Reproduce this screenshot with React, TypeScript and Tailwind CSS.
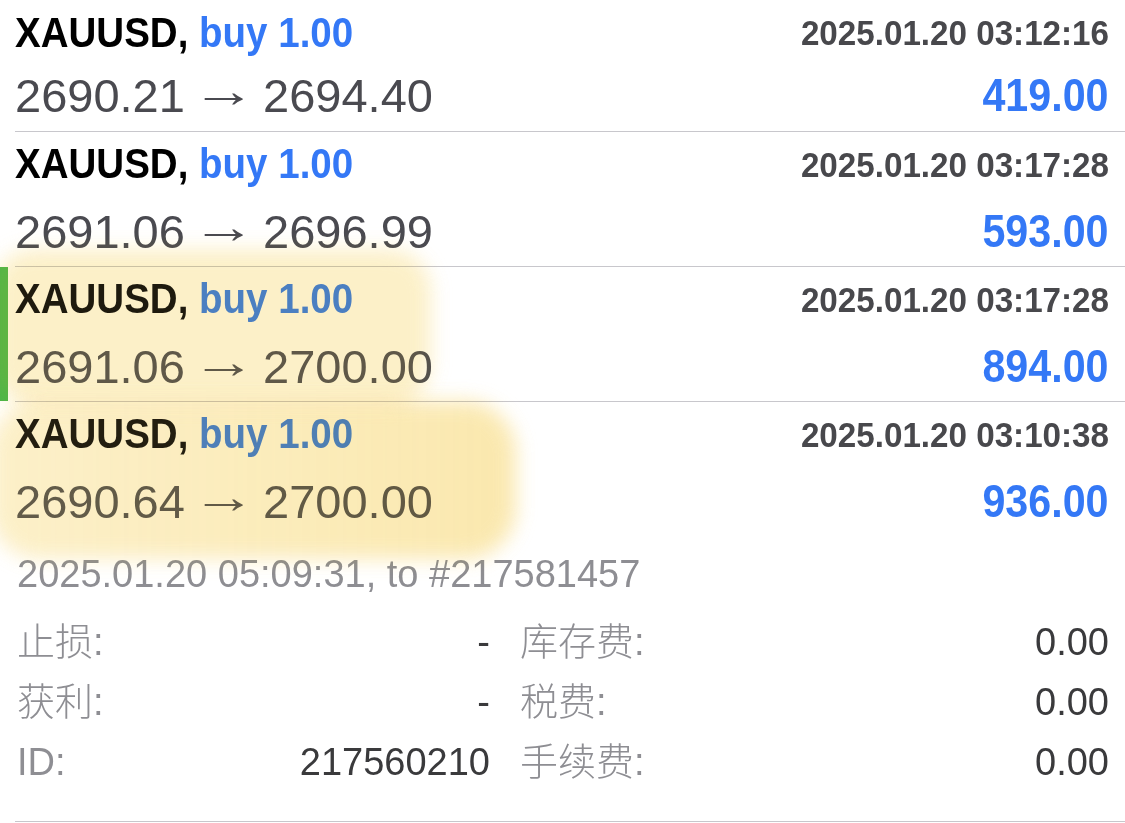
import React from 'react';

type Trade = {
  open: string;
  close: string;
  time: string;
  profit: string;
  active?: boolean;
};

const trades: Trade[] = [
  { open: '2690.21', close: '2694.40', time: '2025.01.20 03:12:16', profit: '419.00' },
  { open: '2691.06', close: '2696.99', time: '2025.01.20 03:17:28', profit: '593.00' },
  { open: '2691.06', close: '2700.00', time: '2025.01.20 03:17:28', profit: '894.00', active: true },
  { open: '2690.64', close: '2700.00', time: '2025.01.20 03:10:38', profit: '936.00' },
];

const details = [
  { label: '止损:', value: '-', label2: '库存费:', value2: '0.00' },
  { label: '获利:', value: '-', label2: '税费:', value2: '0.00' },
  { label: 'ID:', value: '217560210', label2: '手续费:', value2: '0.00' },
];

const bold = "font-['Liberation_Sans',sans-serif] font-bold";

function TradeRow({ trade, first }: { trade: Trade; first: boolean }) {
  return (
    <div className="flex">
      {/* 左侧标记 */}
      <div className={`w-[15px] flex flex-col ${first ? '' : 'pt-px'}`}>
        {trade.active && <div className="w-2 flex-1 bg-[#4cb848]" />}
      </div>
      <div className={`flex-1 pr-[16px] ${first ? 'pb-[6px]' : 'border-t border-[#c8c7cc]'}`}>
        <div className={`flex items-center justify-between ${first ? 'h-[65px]' : 'h-[64px]'}`}>
          <span className={`${bold} inline-block origin-left scale-x-[0.917] whitespace-nowrap text-[42px] leading-none text-black`}>
            XAUUSD, <span className="text-[#3478f6]">buy 1.00</span>
          </span>
          <span className={`${bold} inline-block origin-right scale-x-[0.948] whitespace-nowrap text-[35px] leading-none text-[#48484c]`}>
            {trade.time}
          </span>
        </div>
        <div className={`flex items-center justify-between ${first ? 'h-[60px]' : 'h-[70px]'}`}>
          <span className="font-['Liberation_Sans',sans-serif] whitespace-nowrap text-[47px] leading-none text-[#4a4a50]">
            {trade.open}{' '}
            <span className="inline-block ml-[2px] mr-[3px] -translate-y-[5px] scale-x-[1.37]">→</span>{' '}
            {trade.close}
          </span>
          <span className={`${bold} inline-block origin-right scale-x-[0.885] text-[46.6px] leading-none text-[#3478f6]`}>
            {trade.profit}
          </span>
        </div>
      </div>
    </div>
  );
}

export default function App() {
  return (
    <div className="relative w-[1125px] h-[823px] overflow-hidden bg-white">
      {trades.map((t, i) => (
        <TradeRow key={i} trade={t} first={i === 0} />
      ))}

      {/* 平仓信息 */}
      <div className="pl-[17px] pr-[16px] font-['Liberation_Sans','Noto_Sans_CJK_SC',sans-serif]">
        <div className="h-[76px] flex items-center text-[38px] leading-none text-[#8e8e93]">
          2025.01.20 05:09:31, to #217581457
        </div>
        <div className="grid grid-cols-[473px_1fr] gap-x-[30px] mb-[29px]">
          {details.map((d) => (
            <React.Fragment key={d.label}>
              <div className="h-[60px] flex items-center justify-between text-[38px] leading-none">
                <span className="font-light text-[#8e8e93]">{d.label}</span>
                <span className="text-[#3a3a3c]">{d.value}</span>
              </div>
              <div className="h-[60px] flex items-center justify-between text-[38px] leading-none">
                <span className="font-light text-[#8e8e93]">{d.label2}</span>
                <span className="text-[#3a3a3c]">{d.value2}</span>
              </div>
            </React.Fragment>
          ))}
        </div>
      </div>
      <div className="ml-[15px] border-t border-[#c8c7cc]" />

      {/* 荧光笔标记 */}
      <div className="pointer-events-none absolute left-[-6px] top-[250px] w-[436px] h-[154px] rounded-[40px] bg-[#fbe7a0]/45 blur-[10px] mix-blend-multiply" />
      <div className="pointer-events-none absolute left-[-6px] top-[250px] w-[436px] h-[154px] rounded-[40px] bg-[#f5d870]/12 blur-[10px]" />
      <div className="pointer-events-none absolute left-[-10px] top-[402px] w-[525px] h-[156px] rounded-[50px] bg-gradient-to-r from-[#fbe9a8]/45 to-[#f9df8a]/60 blur-[10px] mix-blend-multiply" />
      <div className="pointer-events-none absolute left-[-10px] top-[402px] w-[525px] h-[156px] rounded-[50px] bg-[#f5d870]/14 blur-[10px]" />
    </div>
  );
}
